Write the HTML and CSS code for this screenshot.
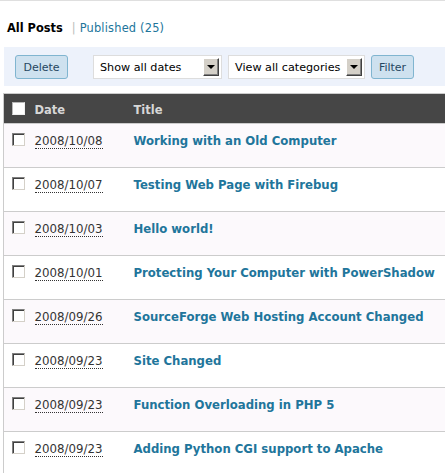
FILE: index.html
```html
<!DOCTYPE html>
<html>
<head>
<meta charset="utf-8">
<link rel="stylesheet" href="styles.css">
</head>
<body>
<div class="topline"></div>
<ul class="subnav">
  <li class="current">All Posts</li>
  <li class="sep">|</li>
  <li><a href="#">Published (25)</a></li>
</ul>
<div class="filterbar">
  <button class="btn delete">Delete</button>
  <div class="select dates"><span class="label">Show all dates</span><span class="arrow"></span></div>
  <div class="select cats"><span class="label">View all categories</span><span class="arrow"></span></div>
  <button class="btn filter">Filter</button>
</div>
<table class="posts">
  <thead>
    <tr>
      <th class="cb"><span class="hcheck"></span></th>
      <th class="date">Date</th>
      <th class="title">Title</th>
    </tr>
  </thead>
  <tbody>
    <tr class="alt"><td class="cb"><span class="check"></span></td><td class="date"><abbr>2008/10/08</abbr></td><td class="title"><a href="#">Working with an Old Computer</a></td></tr>
    <tr><td class="cb"><span class="check"></span></td><td class="date"><abbr>2008/10/07</abbr></td><td class="title"><a href="#">Testing Web Page with Firebug</a></td></tr>
    <tr class="alt"><td class="cb"><span class="check"></span></td><td class="date"><abbr>2008/10/03</abbr></td><td class="title"><a href="#">Hello world!</a></td></tr>
    <tr><td class="cb"><span class="check"></span></td><td class="date"><abbr>2008/10/01</abbr></td><td class="title"><a href="#">Protecting Your Computer with PowerShadow</a></td></tr>
    <tr class="alt"><td class="cb"><span class="check"></span></td><td class="date"><abbr>2008/09/26</abbr></td><td class="title"><a href="#">SourceForge Web Hosting Account Changed</a></td></tr>
    <tr><td class="cb"><span class="check"></span></td><td class="date"><abbr>2008/09/23</abbr></td><td class="title"><a href="#">Site Changed</a></td></tr>
    <tr class="alt"><td class="cb"><span class="check"></span></td><td class="date"><abbr>2008/09/23</abbr></td><td class="title"><a href="#">Function Overloading in PHP 5</a></td></tr>
    <tr><td class="cb"><span class="check"></span></td><td class="date"><abbr>2008/09/23</abbr></td><td class="title"><a href="#">Adding Python CGI support to Apache</a></td></tr>
  </tbody>
</table>
</body>
</html>
```
FILE: styles.css
```css
html, body {
  margin: 0;
  padding: 0;
  background: #ffffff;
  font-family: "DejaVu Sans", Verdana, sans-serif;
  overflow: hidden;
}

.topline {
  border-top: 1px solid #dfdfdf;
  height: 0;
}

.subnav {
  list-style: none;
  margin: 0;
  padding: 20px 0 0 7px;
  display: flex;
  align-items: center;
  font-size: 11.4px;
  line-height: 14px;
}

.subnav li {
  display: block;
}

.subnav .current {
  font-weight: bold;
  color: #000;
}

.subnav .sep {
  color: #bbbbbb;
  padding: 0 4px 0 9px;
}

.subnav a {
  color: #21759b;
  text-decoration: none;
  letter-spacing: 0.2px;
}

.filterbar {
  margin: 12px 0 0 4px;
  height: 39px;
  background: #edf2fb;
  display: flex;
  align-items: flex-start;
  padding: 8px 0 0 11px;
  box-sizing: border-box;
  gap: 6px;
}

.btn {
  height: 24px;
  box-sizing: border-box;
  border: 1px solid #80b5d0;
  border-radius: 3px;
  background: #cee1ef;
  color: #264761;
  font-family: "DejaVu Sans", Verdana, sans-serif;
  font-size: 11px;
  padding: 0;
  margin: 0;
}

.delete {
  width: 53px;
  margin-right: 19px;
}

.filter {
  width: 43px;
}

.select {
  height: 24px;
  box-sizing: border-box;
  border: 1px solid #dddddd;
  background: #ffffff;
  display: flex;
  align-items: center;
  padding: 0 2px 0 6px;
  font-size: 11.2px;
  color: #000;
}

.select .label {
  flex: 1;
  white-space: nowrap;
}

.dates { width: 129px; }
.cats { width: 137px; }

.select .arrow {
  width: 16px;
  height: 18px;
  box-sizing: border-box;
  background: #d4d0c8;
  border-top: 1px solid #ffffff;
  border-left: 1px solid #ffffff;
  border-right: 1px solid #404040;
  border-bottom: 1px solid #404040;
  box-shadow: inset -1px -1px 0 #808080;
  position: relative;
}

.select .arrow::after {
  content: "";
  position: absolute;
  left: 3px;
  top: 6px;
  border-left: 4px solid transparent;
  border-right: 4px solid transparent;
  border-top: 4px solid #000;
}

.posts {
  margin: 7px 0 0 3px;
  width: 442px;
  border-collapse: collapse;
  border-top: 1px solid #cccccc;
  border-left: 1px solid #cccccc;
}

.posts th {
  background: #464646;
  color: #d7d7d7;
  font-size: 11.5px;
  font-weight: bold;
  text-align: left;
  height: 30px;
  padding: 3px 0 0 0;
  box-sizing: border-box;
  border-bottom: 1px solid #cccccc;
  vertical-align: middle;
}

.posts td {
  height: 44px;
  padding: 10px 0 0 0;
  box-sizing: border-box;
  vertical-align: top;
  border-bottom: 1px solid #cccccc;
}

.posts tr.alt td {
  background: #fcf9fc;
}

.posts .cb {
  width: 31px;
  padding-left: 8px;
  box-sizing: border-box;
}

.posts th.cb {
  padding-top: 0;
  padding-bottom: 1px;
}

.posts td.cb {
  padding-top: 9px;
}

.posts .date {
  width: 99px;
}

.hcheck,
.check {
  display: block;
  width: 13px;
  height: 13px;
  box-sizing: border-box;
  background: #ffffff;
}

.hcheck {
  border: 1px solid;
  border-color: #b8b8b8 #f0f0f0 #f0f0f0 #b8b8b8;
}

.check {
  border: 1px solid;
  border-color: #808080 #d4d0c8 #d4d0c8 #808080;
  box-shadow: inset 1px 1px 0 #404040;
}

.posts td.date {
  font-size: 11.8px;
  line-height: 15px;
  color: #333333;
}

.posts abbr {
  text-decoration: none;
  border-bottom: 1px dotted #333333;
}

.posts td.title {
  font-size: 11.7px;
  line-height: 15px;
  font-weight: bold;
  white-space: nowrap;
}

.posts td.title a {
  color: #21759b;
  text-decoration: none;
}
```
